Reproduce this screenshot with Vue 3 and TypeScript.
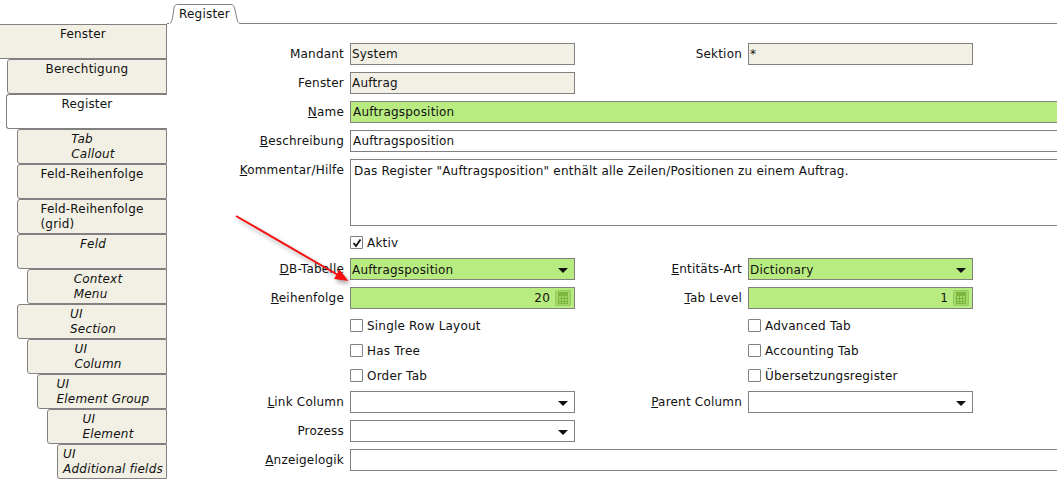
<script setup lang="ts">
interface SideTab {
  lines: string[];
  indent: number;
  italic?: boolean;
  active?: boolean;
}

const sideTabs: SideTab[] = [
  { lines: ["Fenster"], indent: 0 },
  { lines: ["Berechtigung"], indent: 7 },
  { lines: ["Register"], indent: 6, active: true },
  { lines: ["Tab", "Callout"], indent: 17, italic: true },
  { lines: ["Feld-Reihenfolge"], indent: 17 },
  { lines: ["Feld-Reihenfolge", "(grid)"], indent: 17 },
  { lines: ["Feld"], indent: 17, italic: true },
  { lines: ["Context", "Menu"], indent: 27, italic: true },
  { lines: ["UI", "Section"], indent: 17, italic: true },
  { lines: ["UI", "Column"], indent: 27, italic: true },
  { lines: ["UI", "Element Group"], indent: 37, italic: true },
  { lines: ["UI", "Element"], indent: 47, italic: true },
  { lines: ["UI", "Additional fields"], indent: 57, italic: true },
];

const calendarCols = [3, 6, 9, 12];
const calendarRows = [5, 8, 11, 13];
</script>

<template>
  <div class="page">
    <aside class="sidebar">
      <div
        v-for="tab in sideTabs"
        :key="tab.lines.join('-')"
        class="side-tab"
        :class="{ 'side-tab--active': tab.active, 'side-tab--italic': tab.italic, 'side-tab--root': tab.indent === 0 }"
        :style="{ marginLeft: tab.indent + 'px' }"
      >
        <span class="side-tab__text">
          <span v-for="line in tab.lines" :key="line" class="side-tab__line">{{ line }}</span>
        </span>
      </div>
    </aside>

    <main class="main">
      <div class="tabstrip">
        <div class="tabstrip__lead"></div>
        <div class="top-tab">
          <svg class="top-tab__shape" width="72" height="24" viewBox="0 0 72 24">
            <path d="M1 23.5 C2.5 22 3.5 19 4 15 L5 8 C5.5 5.5 6.5 4.5 8.5 4.5 L62 4.5 C64 4.5 65 6 65.5 8 L68 19 C68.5 22 69.5 23.5 71 23.5" fill="#fff" stroke="#808080" />
          </svg>
          <span class="top-tab__label">Register</span>
        </div>
        <div class="tabstrip__rest"></div>
      </div>

      <form class="form" @submit.prevent>
        <label class="lbl">Mandant</label>
        <div class="field field--ro">System</div>
        <label class="lbl lbl--r">Sektion</label>
        <div class="field field--ro">*</div>

        <label class="lbl">Fenster</label>
        <div class="field field--ro">Auftrag</div>

        <label class="lbl"><u>N</u>ame</label>
        <div class="field field--req field--wide">Auftragsposition</div>

        <label class="lbl"><u>B</u>eschreibung</label>
        <div class="field field--wide">Auftragsposition</div>

        <label class="lbl lbl--top"><u>K</u>ommentar/Hilfe</label>
        <div class="field field--wide field--area">Das Register "Auftragsposition" enthält alle Zeilen/Positionen zu einem Auftrag.</div>

        <div class="check check--left">
          <span class="check__box">
            <svg width="10" height="10" viewBox="0 0 10 10"><path d="M1.5 5 L4 8 L8.5 1.5" fill="none" stroke="#111" stroke-width="1.8" /></svg>
          </span>
          Aktiv
        </div>

        <label class="lbl"><u>D</u>B-Tabelle</label>
        <div class="field field--req field--combo">
          <span>Auftragsposition</span><i class="caret"></i>
        </div>
        <label class="lbl lbl--r"><u>E</u>ntitäts-Art</label>
        <div class="field field--req field--combo">
          <span>Dictionary</span><i class="caret"></i>
        </div>

        <label class="lbl"><u>R</u>eihenfolge</label>
        <div class="field field--req field--num">
          <span>20</span>
          <svg class="calc" width="16" height="16" viewBox="0 0 16 16">
            <rect x="0.5" y="0.5" width="15" height="15" rx="1" fill="#a3d76a" stroke="#94cb5a" />
            <rect x="3" y="2" width="10" height="3" fill="#7cb63c" />
            <path v-for="x in calendarCols" :key="'c' + x" :d="`M${x}.5 5 V14`" stroke="#7cb63c" />
            <path v-for="y in calendarRows" :key="'r' + y" :d="`M3 ${y}.5 H13`" stroke="#7cb63c" />
          </svg>
        </div>
        <label class="lbl lbl--r"><u>T</u>ab Level</label>
        <div class="field field--req field--num">
          <span>1</span>
          <svg class="calc" width="16" height="16" viewBox="0 0 16 16">
            <rect x="0.5" y="0.5" width="15" height="15" rx="1" fill="#a3d76a" stroke="#94cb5a" />
            <rect x="3" y="2" width="10" height="3" fill="#7cb63c" />
            <path v-for="x in calendarCols" :key="'c' + x" :d="`M${x}.5 5 V14`" stroke="#7cb63c" />
            <path v-for="y in calendarRows" :key="'r' + y" :d="`M3 ${y}.5 H13`" stroke="#7cb63c" />
          </svg>
        </div>

        <div class="check check--left"><span class="check__box"></span>Single Row Layout</div>
        <div class="check check--right"><span class="check__box"></span>Advanced Tab</div>
        <div class="check check--left"><span class="check__box"></span>Has Tree</div>
        <div class="check check--right"><span class="check__box"></span>Accounting Tab</div>
        <div class="check check--left"><span class="check__box"></span>Order Tab</div>
        <div class="check check--right"><span class="check__box"></span>Übersetzungsregister</div>

        <label class="lbl"><u>L</u>ink Column</label>
        <div class="field field--combo"><span></span><i class="caret"></i></div>
        <label class="lbl lbl--r"><u>P</u>arent Column</label>
        <div class="field field--combo"><span></span><i class="caret"></i></div>

        <label class="lbl">Prozess</label>
        <div class="field field--combo"><span></span><i class="caret"></i></div>

        <label class="lbl"><u>A</u>nzeigelogik</label>
        <div class="field field--wide"></div>
      </form>
    </main>

    <!-- annotation drawn over the screenshot -->
    <svg class="arrow" width="1057" height="479" viewBox="0 0 1057 479">
      <path d="M236 216 L338 275" stroke="#f50f0f" stroke-width="2" fill="none" />
      <path d="M348.5 281 L334 279 L339.5 269.5 Z" fill="#f50f0f" />
    </svg>
  </div>
</template>

<style scoped>
.page {
  position: relative;
  display: flex;
  width: 1057px;
  height: 479px;
  overflow: hidden;
  background: #fff;
  color: #111;
  font-family: "DejaVu Sans", sans-serif;
  font-size: 12px;
  letter-spacing: 0.2px;
}

.sidebar {
  flex: none;
  display: flex;
  flex-direction: column;
  width: 167px;
  padding-top: 24px;
  box-sizing: border-box;
}

.side-tab {
  flex: none;
  height: 35px;
  box-sizing: border-box;
  padding-top: 2px;
  text-align: center;
  background: #f2f0e4;
  border: 1px solid #808080;
  border-radius: 3px 0 0 3px;
  line-height: 15px;
}

.side-tab--root {
  border-left: 0;
  border-radius: 0;
}

.side-tab--active {
  background: #fff;
  border-right: 0;
}

.side-tab--italic {
  font-style: italic;
  padding-left: 2px;
}

.side-tab__text {
  display: inline-block;
  text-align: left;
}

.side-tab__line {
  display: block;
  white-space: nowrap;
}

.main {
  flex: 1;
  min-width: 0;
}

.tabstrip {
  display: flex;
  height: 24px;
}

.tabstrip__lead {
  width: 2px;
  border-bottom: 1px solid #808080;
  box-sizing: border-box;
}

.tabstrip__rest {
  flex: 1;
  border-bottom: 1px solid #808080;
  box-sizing: border-box;
}

.top-tab {
  position: relative;
  width: 71px;
  height: 24px;
}

.top-tab__shape {
  position: absolute;
  left: 0;
  top: 0;
}

.top-tab__label {
  position: absolute;
  left: 10px;
  top: 7px;
  line-height: 15px;
}

.form {
  display: grid;
  grid-template-columns: 183px 225px 173px 225px 1fr;
  row-gap: 7px;
  padding-top: 19px;
}

.lbl {
  grid-column: 1;
  padding-right: 6px;
  text-align: right;
  line-height: 22px;
  white-space: nowrap;
}

.lbl--r {
  grid-column: 3;
}

.field {
  display: flex;
  align-items: center;
  height: 22px;
  box-sizing: border-box;
  padding: 0 2px 0 1px;
  background: #fff;
  border: 1px solid #808080;
  white-space: nowrap;
}

.field--ro {
  background: #f2f0e4;
}

.field--req {
  background: #b9ec80;
}

.field--wide {
  grid-column: 2 / -1;
  margin-right: -3px;
  padding-left: 2px;
}

.field--area {
  align-items: flex-start;
  height: 67px;
  padding-top: 4px;
  padding-left: 3px;
}

.field--combo {
  justify-content: space-between;
  padding-top: 2px;
}

.field--num {
  justify-content: flex-end;
  gap: 5px;
  padding-right: 3px;
}

.calc {
  flex: none;
}

.caret {
  width: 0;
  height: 0;
  margin-right: 4px;
  border-left: 5px solid transparent;
  border-right: 5px solid transparent;
  border-top: 5px solid #111;
}

.check {
  display: flex;
  align-items: center;
  height: 18px;
  padding-top: 1px;
  box-sizing: border-box;
  white-space: nowrap;
}

.check--left {
  grid-column: 2;
}

.check--right {
  grid-column: 4;
}

.check__box {
  flex: none;
  display: flex;
  align-items: center;
  justify-content: center;
  width: 11px;
  height: 11px;
  margin: 0 4px 0 0;
  background: #fff;
  border: 1px solid #808080;
  border-radius: 1px;
}

.arrow {
  position: absolute;
  left: 0;
  top: 0;
  pointer-events: none;
  filter: drop-shadow(2px 3px 2px rgba(0, 0, 0, 0.35));
}
</style>

<style>
html,
body {
  margin: 0;
  overflow: hidden;
}
</style>
